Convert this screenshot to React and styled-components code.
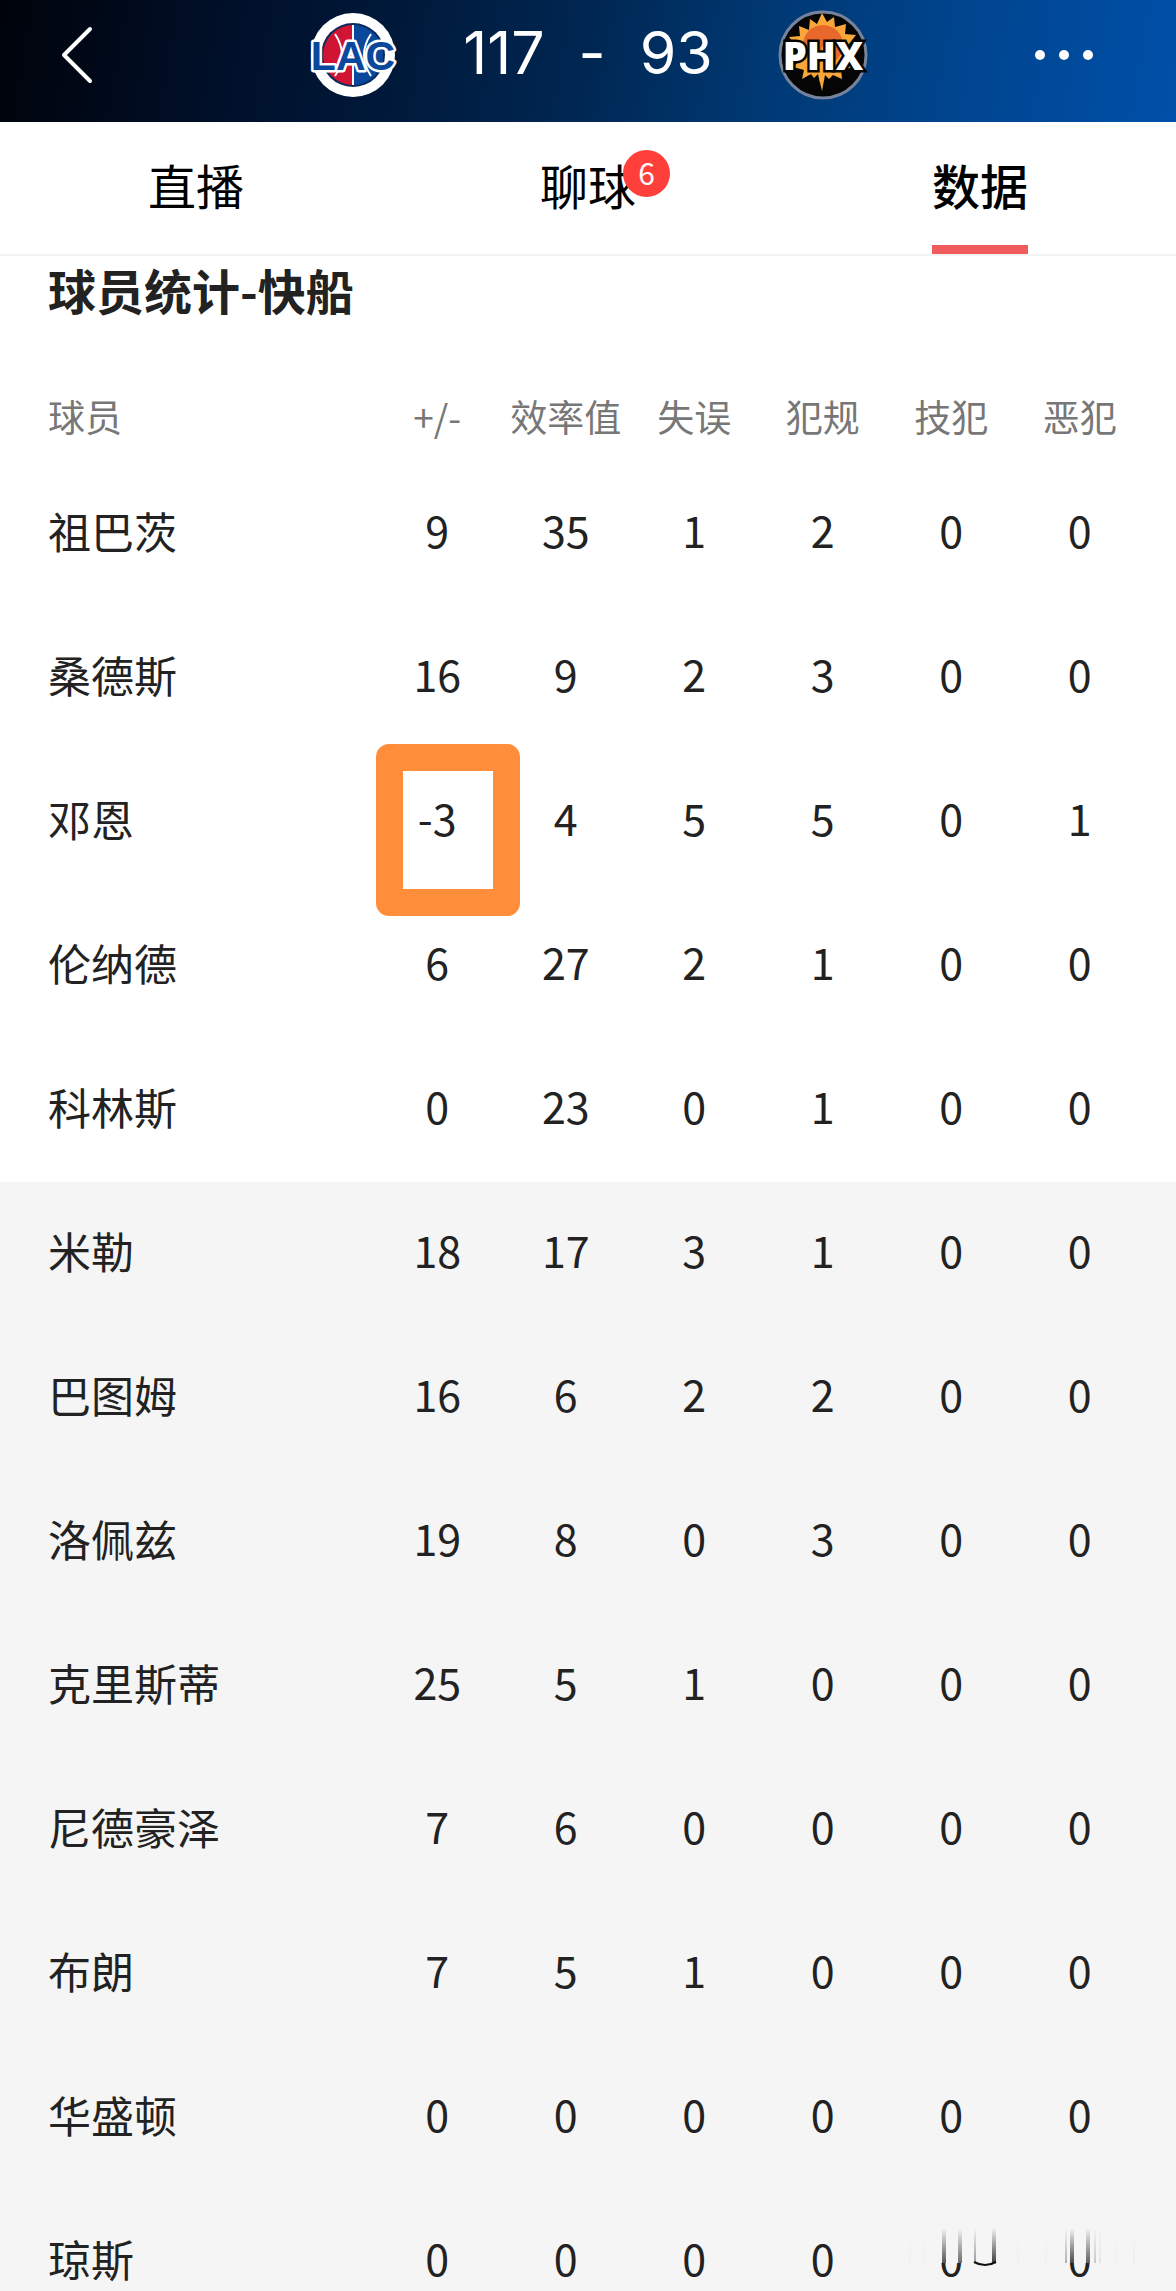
import React, { useState } from 'react';
import styled, { createGlobalStyle } from 'styled-components';

const GlobalStyle = createGlobalStyle`
  * {
    box-sizing: border-box;
  }

  body {
    margin: 0;
    background: #fff;
    color: #222;
    font-family: 'Noto Sans CJK SC', sans-serif;
  }

  button {
    border: 0;
    padding: 0;
    background: none;
    color: inherit;
    font: inherit;
    cursor: pointer;
  }
`;

const Screen = styled.div`
  position: relative;
  display: flex;
  flex-direction: column;
  height: 100vh;
  overflow: hidden;
`;

const TopBar = styled.header`
  flex: none;
  display: grid;
  grid-template-columns: 1fr auto 1fr;
  align-items: center;
  height: 122px;
  padding: 0 60px;
  padding-bottom: 12px;
  color: #fff;
  background: linear-gradient(
    100deg,
    #00030a 0%,
    #00102a 20%,
    #001a3c 35%,
    #002753 50%,
    #003974 65%,
    #00448d 80%,
    #0050a9 100%
  );
`;

const IconButton = styled.button`
  display: flex;
  justify-self: ${({ $end }) => ($end ? 'end' : 'start')};
  padding-right: ${({ $end }) => ($end ? '22px' : '0')};
`;

const Matchup = styled.div`
  display: flex;
  align-items: center;
  gap: 64px;
`;

const Score = styled.div`
  display: flex;
  gap: 34px;
  padding-bottom: 5px;
  font-family: Inter, sans-serif;
  font-size: 59px;
  line-height: 72px;
`;

const Tabs = styled.div`
  flex: none;
  display: grid;
  grid-template-columns: repeat(3, 1fr);
  height: 134px;
  border-bottom: 2px solid #f2f2f2;
`;

const Tab = styled.button.attrs({ type: 'button', role: 'tab' })`
  display: flex;
  justify-content: center;
  font-size: 48px;
  line-height: 72px;
  color: #000;
  font-weight: ${({ $active }) => ($active ? 500 : 400)};
`;

const TabLabel = styled.span`
  position: relative;
  height: 132px;
  padding-top: 26px;
  border-bottom: 9px solid ${({ $active }) => ($active ? '#f05c5c' : 'transparent')};
`;

const Badge = styled.span`
  position: absolute;
  top: 28px;
  left: 83px;
  width: 47px;
  height: 47px;
  border-radius: 50%;
  background: #ff3f3a;
  color: #fff;
  font-size: 30px;
  line-height: 45px;
  text-align: center;
`;

const Content = styled.main`
  flex: 1;
  min-height: 0;
`;

const Title = styled.h2`
  margin: 0;
  padding-left: 48px;
  font-size: 48px;
  line-height: 66px;
  font-weight: 700;
`;

const StatsTable = styled.table`
  width: 100%;
  table-layout: fixed;
  border-collapse: collapse;
`;

const NameCol = styled.col`
  width: 373px;
`;

const EndCol = styled.col`
  width: 32px;
`;

const HeadRow = styled.tr`
  height: 140px;
  color: #777;
  font-size: 37px;
  line-height: 48px;
`;

const HeadCell = styled.th`
  padding: ${({ $name }) => ($name ? '48px 0 0 48px' : '48px 0 0')};
  font-weight: 400;
  text-align: ${({ $name }) => ($name ? 'left' : 'center')};
  white-space: nowrap;
`;

const PlayerGroup = styled.tbody`
  background: ${({ $bench }) => ($bench ? '#f5f5f5' : '#fff')};
`;

const PlayerRow = styled.tr`
  height: 144px;
  font-size: 43px;
  line-height: 64px;
`;

const PlayerName = styled.th`
  padding: 0 0 8px 48px;
  font-weight: 400;
  text-align: left;
`;

const StatCell = styled.td`
  position: relative;
  padding: 0 0 10px;
  text-align: center;
`;

const Marker = styled.span`
  position: absolute;
  top: -6px;
  left: 3px;
  width: 144px;
  height: 172px;
  border: 27px solid #ff8d3a;
  border-radius: 13px;
  z-index: 1;
`;

const Smear = styled.svg`
  position: absolute;
  right: 20px;
  bottom: 24px;
`;

const columns = ['+/-', '效率值', '失误', '犯规', '技犯', '恶犯'];

const starters = [
  { name: '祖巴茨', stats: [9, 35, 1, 2, 0, 0] },
  { name: '桑德斯', stats: [16, 9, 2, 3, 0, 0] },
  { name: '邓恩', stats: [-3, 4, 5, 5, 0, 1], marked: 0 },
  { name: '伦纳德', stats: [6, 27, 2, 1, 0, 0] },
  { name: '科林斯', stats: [0, 23, 0, 1, 0, 0] },
];

const bench = [
  { name: '米勒', stats: [18, 17, 3, 1, 0, 0] },
  { name: '巴图姆', stats: [16, 6, 2, 2, 0, 0] },
  { name: '洛佩兹', stats: [19, 8, 0, 3, 0, 0] },
  { name: '克里斯蒂', stats: [25, 5, 1, 0, 0, 0] },
  { name: '尼德豪泽', stats: [7, 6, 0, 0, 0, 0] },
  { name: '布朗', stats: [7, 5, 1, 0, 0, 0] },
  { name: '华盛顿', stats: [0, 0, 0, 0, 0, 0] },
  { name: '琼斯', stats: [0, 0, 0, 0, 0, 0] },
];

const tabs = [
  { id: 'live', label: '直播' },
  { id: 'chat', label: '聊球', badge: 6 },
  { id: 'data', label: '数据' },
];

// x, width and opacity of each faded streak
const streaks = [
  [44, 4, 0.7],
  [60, 4, 0.6],
  [75, 2, 0.4],
  [94, 4, 0.8],
  [166, 2, 0.3],
  [172, 4, 0.75],
  [188, 4, 0.65],
  [195, 2, 0.2],
  [200, 1, 0.15],
  [10, 2, 0.02],
  [24, 2, 0.02],
  [118, 2, 0.02],
  [146, 2, 0.02],
  [216, 1, 0.04],
  [234, 1, 0.06],
];

const ClippersLogo = () => (
  <svg width="92" height="92" viewBox="0 0 92 92" role="img" aria-label="LAC">
    <circle cx="46" cy="46" r="42" fill="#fff" />
    <circle cx="46" cy="46" r="32" fill="#0a2a5c" />
    <path d="M46 16a30 30 0 0 0 0 60z" fill="#cf1533" />
    <path d="M46 16a30 30 0 0 1 0 60z" fill="#0a489e" />
    <path
      d="M46 16v60M28 25q14 21 0 42M64 25q-14 21 0 42"
      fill="none"
      stroke="#fff"
      strokeWidth="2"
    />
    <text
      x="46"
      y="61"
      textAnchor="middle"
      fontFamily="Liberation Sans, sans-serif"
      fontSize="41"
      fontWeight="700"
      fill="#0a489e"
      strokeLinejoin="round"
    >
      <tspan stroke="#fff" strokeWidth="5" paintOrder="stroke">
        LAC
      </tspan>
    </text>
  </svg>
);

const SunsLogo = () => (
  <svg width="92" height="92" viewBox="0 0 92 92" role="img" aria-label="PHX">
    <circle cx="46" cy="46" r="43" fill="#050505" stroke="#77839a" strokeWidth="3" />
    <path
      d="M45 4l5 9 7-5 1 10 11-3-1 10 11 1-7 9 4 10-8 5 6 9-10 1 1 10-9-4-4 4-4-4-3 16-4-17-4 4-3-4-9 5 2-9-11-3 8-8-10-5 5-8-7-9 11-1-1-10 10 4 1-11 7 5z"
      fill="#f9a73a"
    />
    <circle cx="46" cy="36" r="20" fill="#e8682c" />
    <path d="M46 36v28l-3 10-3-20z" fill="#f9a73a" />
    <text
      x="46"
      y="61"
      textAnchor="middle"
      fontFamily="Open Sans, sans-serif"
      fontSize="38"
      fontWeight="800"
      fill="#fff"
      stroke="#050505"
      strokeWidth="5"
      paintOrder="stroke"
    >
      PHX
    </text>
  </svg>
);

const PlayerRows = ({ players }) =>
  players.map((player) => (
    <PlayerRow key={player.name}>
      <PlayerName scope="row">{player.name}</PlayerName>
      {player.stats.map((value, idx) => (
        <StatCell key={columns[idx]}>
          {value}
          {player.marked === idx && <Marker />}
        </StatCell>
      ))}
      <td />
    </PlayerRow>
  ));

const App = () => {
  const [active, setActive] = useState('data');

  return (
    <Screen>
      <GlobalStyle />
      <TopBar>
        <IconButton type="button" aria-label="返回">
          <svg width="34" height="60" viewBox="0 0 34 60" fill="none">
            <path
              d="M30 4L4 30l26 26"
              stroke="#fff"
              strokeWidth="4"
              strokeLinecap="round"
              strokeLinejoin="round"
            />
          </svg>
        </IconButton>
        <Matchup>
          <ClippersLogo />
          <Score>
            <span>117</span>
            <span>-</span>
            <span>93</span>
          </Score>
          <SunsLogo />
        </Matchup>
        <IconButton type="button" aria-label="更多" $end>
          <svg width="60" height="12" viewBox="0 0 60 12" fill="#fff">
            <circle cx="6" cy="6" r="5" />
            <circle cx="30" cy="6" r="5" />
            <circle cx="54" cy="6" r="5" />
          </svg>
        </IconButton>
      </TopBar>

      <Tabs role="tablist">
        {tabs.map((tab) => (
          <Tab
            key={tab.id}
            $active={tab.id === active}
            aria-selected={tab.id === active}
            onClick={() => setActive(tab.id)}
          >
            <TabLabel $active={tab.id === active}>
              {tab.label}
              {tab.badge && <Badge>{tab.badge}</Badge>}
            </TabLabel>
          </Tab>
        ))}
      </Tabs>

      <Content>
        <Title>球员统计-快船</Title>
        <StatsTable>
          <colgroup>
            <NameCol />
            {columns.map((column) => (
              <col key={column} />
            ))}
            <EndCol />
          </colgroup>
          <thead>
            <HeadRow>
              <HeadCell scope="col" $name>
                球员
              </HeadCell>
              {columns.map((column) => (
                <HeadCell key={column} scope="col">
                  {column}
                </HeadCell>
              ))}
              <td />
            </HeadRow>
          </thead>
          <PlayerGroup>
            <PlayerRows players={starters} />
          </PlayerGroup>
          <PlayerGroup $bench>
            <PlayerRows players={bench} />
          </PlayerGroup>
        </StatsTable>
      </Content>

      <Smear width="256" height="43" viewBox="0 0 256 43" aria-hidden="true">
        <defs>
          <linearGradient id="fade" x1="0" y1="0" x2="0" y2="1">
            <stop offset="0" stopColor="#111" stopOpacity="0" />
            <stop offset="1" stopColor="#111" />
          </linearGradient>
        </defs>
        <rect width="256" height="39" fill="#f5f5f5" />
        {streaks.map(([x, width, opacity]) => (
          <rect key={x} x={x - width / 2} y="4" width={width} height="35" fill="url(#fade)" opacity={opacity} />
        ))}
        <path d="M74 38q11 6 22 0" fill="none" stroke="#111" strokeWidth="2" />
      </Smear>
    </Screen>
  );
};

export default App;
